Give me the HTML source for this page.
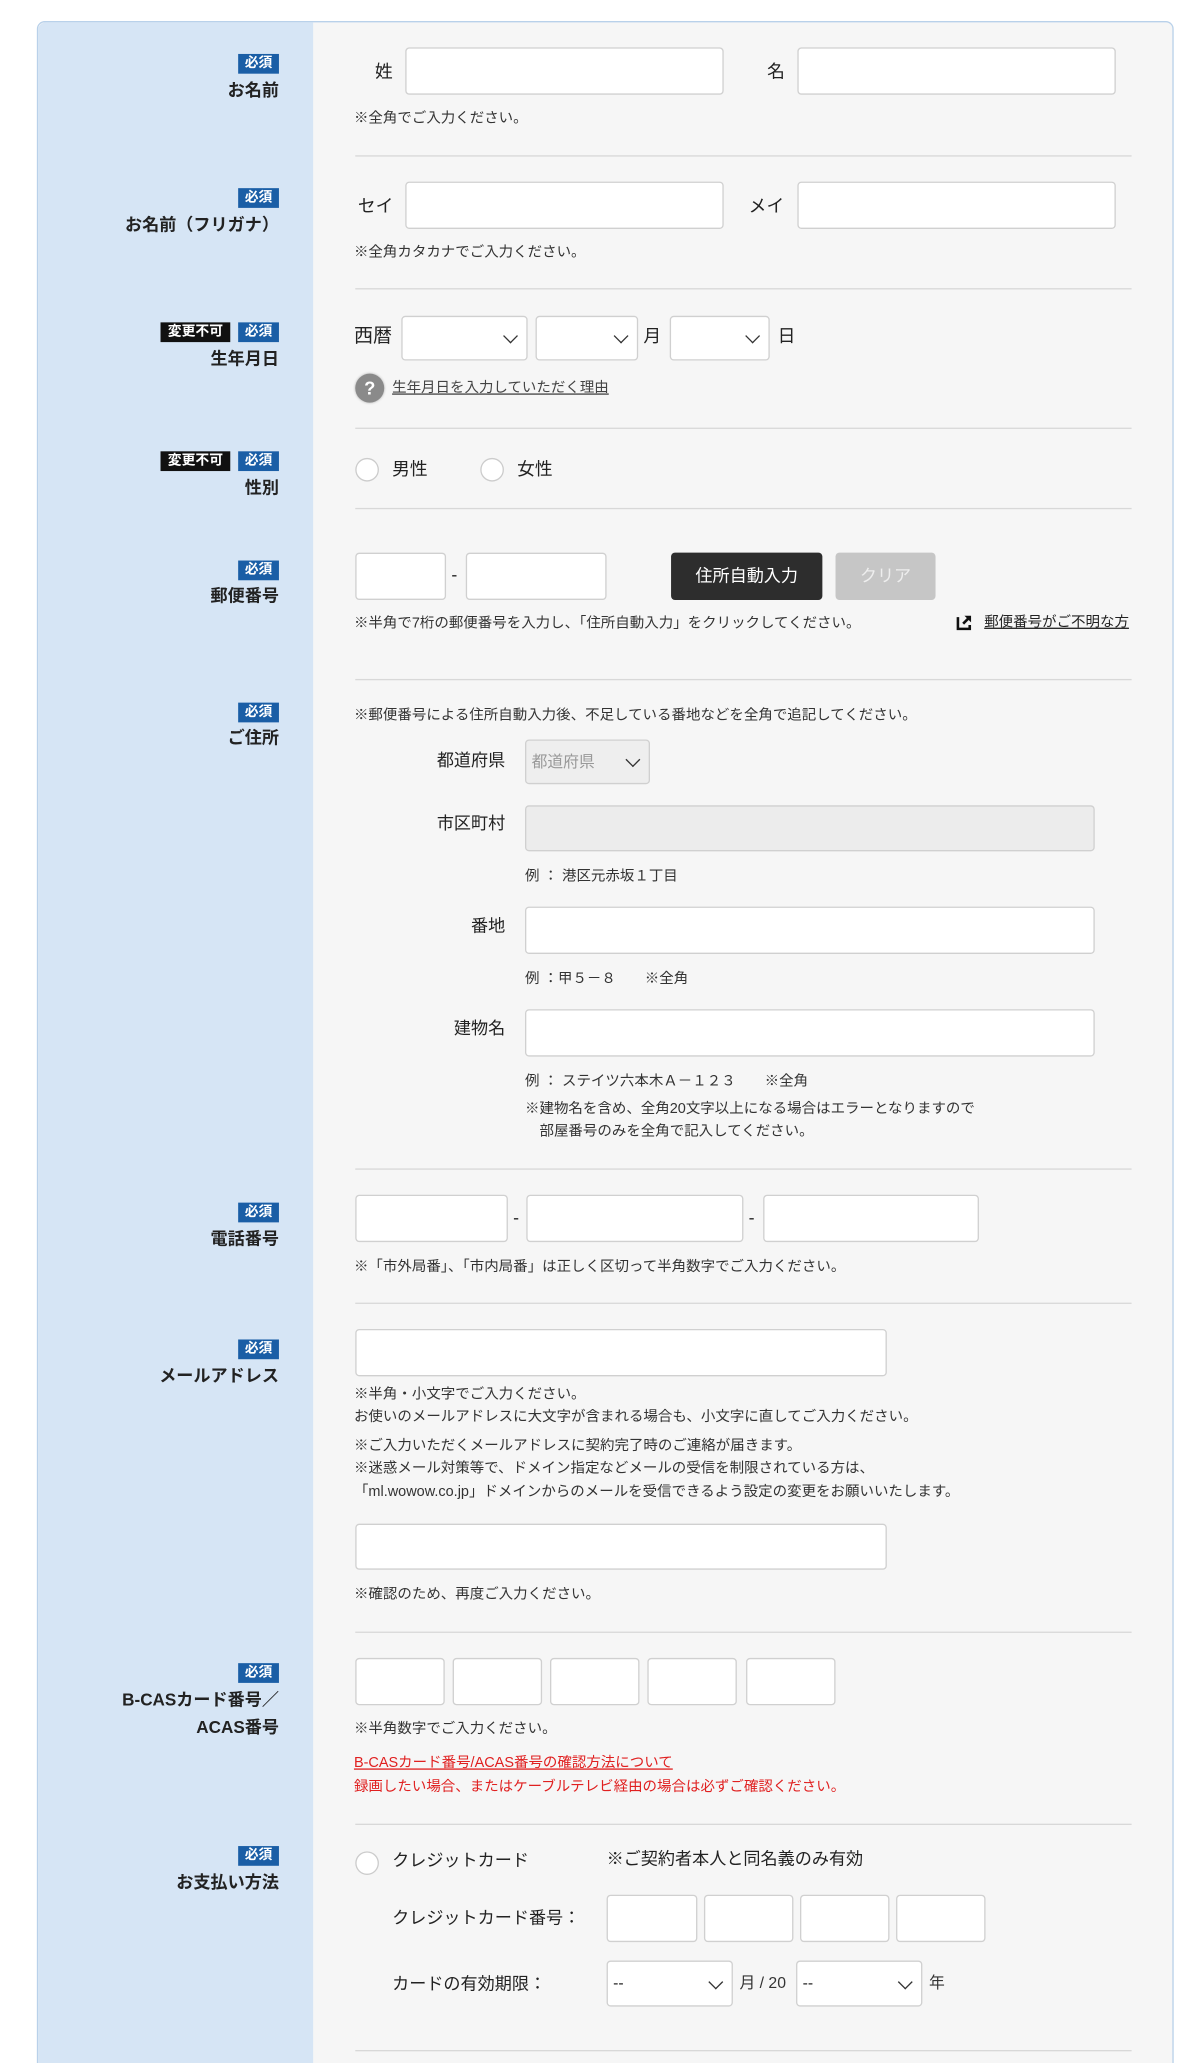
<!DOCTYPE html>
<html><head><meta charset="utf-8">
<style>
html,body{margin:0;padding:0;background:#fff;width:1200px;height:2063px;overflow:hidden}
#w{position:absolute;left:0;top:0;width:912px;height:1568px;overflow:hidden;transform:scale(1.31579);transform-origin:0 0;font-family:"Liberation Sans","Noto Sans CJK JP",sans-serif;color:#222}
#w div,#w span{position:absolute}
.box{left:28px;top:16px;width:862px;height:1620px;border:1px solid #b9d1ea;border-radius:6px;background:#f6f6f6;overflow:hidden}
.lc{left:29px;top:17px;width:209px;height:1620px;background:#d6e5f5;border-radius:6px 0 0 0}
.bd{height:15px;line-height:15px;font-size:10.5px;font-weight:bold;color:#fff;background:#1a5ea6;padding:0 3px;text-align:center}
.bk{background:#111}
.lb{right:700px;font-size:13px;font-weight:bold;line-height:16px;text-align:right;white-space:nowrap}
.t{font-size:13.5px;line-height:16px;white-space:nowrap}
.n{font-size:11px;line-height:14px;color:#333;white-space:nowrap}
.in{background:#fff;border:1px solid #d0d0d0;border-radius:3px;box-sizing:border-box}
.hr{left:270px;width:590px;height:1px;background:#d8d8d8}
.sel::after{content:"";position:absolute;right:8px;top:50%;width:7px;height:7px;border-right:1.5px solid #333;border-bottom:1.5px solid #333;transform:translateY(-70%) rotate(45deg)}
.rd{width:18px;height:18px;border:1px solid #ccc;border-radius:50%;background:#fff;box-sizing:border-box}
.red{color:#e02020}
</style></head><body>
<div id="w">
<div class="box"></div>
<div class="lc"></div>

<div class="bd" style="left:181px;top:41px;width:25px">必須</div>
<div class="lb" style="top:61px">お名前</div>
<div class="t" style="left:285px;top:47px">姓</div>
<div class="in" style="left:308px;top:36px;width:242px;height:36px"></div>
<div class="t" style="left:583px;top:47px">名</div>
<div class="in" style="left:606px;top:36px;width:242px;height:36px"></div>
<div class="n" style="left:269px;top:83px">※全角でご入力ください。</div>
<div class="hr" style="top:118px"></div>

<div class="bd" style="left:181px;top:143px;width:25px">必須</div>
<div class="lb" style="top:163px">お名前（フリガナ）</div>
<div class="t" style="left:272px;top:149px">セイ</div>
<div class="in" style="left:308px;top:138px;width:242px;height:36px"></div>
<div class="t" style="left:569px;top:149px">メイ</div>
<div class="in" style="left:606px;top:138px;width:242px;height:36px"></div>
<div class="n" style="left:269px;top:185px">※全角カタカナでご入力ください。</div>
<div class="hr" style="top:219px"></div>

<div class="bd bk" style="left:122px;top:245px;width:47px">変更不可</div>
<div class="bd" style="left:181px;top:245px;width:25px">必須</div>
<div class="lb" style="top:265px">生年月日</div>
<div class="t" style="left:269px;top:248px;font-size:14.5px">西暦</div>
<div class="in sel" style="left:305px;top:240px;width:96px;height:34px"></div>
<div class="in sel" style="left:407px;top:240px;width:78px;height:34px"></div>
<div class="t" style="left:489px;top:248px">月</div>
<div class="in sel" style="left:509px;top:240px;width:76px;height:34px"></div>
<div class="t" style="left:591px;top:248px">日</div>
<div style="left:270px;top:284px;width:22px;height:22px;border-radius:50%;background:#8a8a8a;color:#fff;font-weight:bold;font-size:14px;line-height:22px;text-align:center;box-shadow:0 0 2px #aaa">?</div>
<div class="n" style="left:298px;top:288px;text-decoration:underline;color:#444">生年月日を入力していただく理由</div>
<div class="hr" style="top:325px"></div>

<div class="bd bk" style="left:122px;top:343px;width:47px">変更不可</div>
<div class="bd" style="left:181px;top:343px;width:25px">必須</div>
<div class="lb" style="top:363px">性別</div>
<div class="rd" style="left:270px;top:348px"></div>
<div class="t" style="left:298px;top:349px">男性</div>
<div class="rd" style="left:365px;top:348px"></div>
<div class="t" style="left:393px;top:349px">女性</div>
<div class="hr" style="top:386px"></div>

<div class="bd" style="left:181px;top:426px;width:25px">必須</div>
<div class="lb" style="top:445px">郵便番号</div>
<div class="in" style="left:270px;top:420px;width:69px;height:36px"></div>
<div class="t" style="left:343px;top:429px">-</div>
<div class="in" style="left:354px;top:420px;width:107px;height:36px"></div>
<div style="left:510px;top:420px;width:115px;height:36px;background:#2d2d2d;border-radius:3px;color:#fff;font-size:13px;line-height:36px;text-align:center">住所自動入力</div>
<div style="left:635px;top:420px;width:76px;height:36px;background:#c6c6c6;border-radius:3px;color:#eee;font-size:13px;line-height:36px;text-align:center">クリア</div>
<div class="n" style="left:269px;top:467px">※半角で7桁の郵便番号を入力し、「住所自動入力」をクリックしてください。</div>
<svg style="position:absolute;left:727px;top:467px" width="12" height="12" viewBox="0 0 12 12"><path d="M1 2V11H10V8" fill="none" stroke="#111" stroke-width="2"/><path d="M6 1H11V6Z" fill="#111"/><path d="M5 7L10 2" stroke="#111" stroke-width="2"/></svg>
<div class="n" style="left:748px;top:466px;text-decoration:underline;color:#222">郵便番号がご不明な方</div>
<div class="hr" style="top:516px"></div>

<div class="bd" style="left:181px;top:534px;width:25px">必須</div>
<div class="lb" style="top:553px">ご住所</div>
<div class="n" style="left:269px;top:537px">※郵便番号による住所自動入力後、不足している番地などを全角で追記してください。</div>
<div class="t" style="left:300px;width:84px;text-align:right;top:570px;font-size:13px">都道府県</div>
<div class="in sel" style="left:399px;top:562px;width:95px;height:34px;background:#eee;color:#999;font-size:12px;line-height:32px;padding-left:4px">都道府県</div>
<div class="t" style="left:300px;width:84px;text-align:right;top:618px;font-size:13px">市区町村</div>
<div class="in" style="left:399px;top:612px;width:433px;height:35px;background:#ececec"></div>
<div class="n" style="left:399px;top:659px">例 ： 港区元赤坂１丁目</div>
<div class="t" style="left:300px;width:84px;text-align:right;top:696px;font-size:13px">番地</div>
<div class="in" style="left:399px;top:689px;width:433px;height:36px"></div>
<div class="n" style="left:399px;top:737px">例 ：甲５－８　　※全角</div>
<div class="t" style="left:300px;width:84px;text-align:right;top:774px;font-size:13px">建物名</div>
<div class="in" style="left:399px;top:767px;width:433px;height:36px"></div>
<div class="n" style="left:399px;top:815px">例 ： ステイツ六本木Ａ－１２３　　※全角</div>
<div class="n" style="left:399px;top:836px">※建物名を含め、全角20文字以上になる場合はエラーとなりますので</div>
<div class="n" style="left:410px;top:853px">部屋番号のみを全角で記入してください。</div>
<div class="hr" style="top:888px"></div>

<div class="bd" style="left:181px;top:914px;width:25px">必須</div>
<div class="lb" style="top:934px">電話番号</div>
<div class="in" style="left:270px;top:908px;width:116px;height:36px"></div>
<div class="t" style="left:390px;top:918px">-</div>
<div class="in" style="left:400px;top:908px;width:165px;height:36px"></div>
<div class="t" style="left:569px;top:918px">-</div>
<div class="in" style="left:580px;top:908px;width:164px;height:36px"></div>
<div class="n" style="left:269px;top:956px">※「市外局番」、「市内局番」は正しく区切って半角数字でご入力ください。</div>
<div class="hr" style="top:990px"></div>

<div class="bd" style="left:181px;top:1018px;width:25px">必須</div>
<div class="lb" style="top:1038px">メールアドレス</div>
<div class="in" style="left:270px;top:1010px;width:404px;height:36px"></div>
<div class="n" style="left:269px;top:1053px">※半角・小文字でご入力ください。</div>
<div class="n" style="left:269px;top:1070px">お使いのメールアドレスに大文字が含まれる場合も、小文字に直してご入力ください。</div>
<div class="n" style="left:269px;top:1092px">※ご入力いただくメールアドレスに契約完了時のご連絡が届きます。</div>
<div class="n" style="left:269px;top:1109px">※迷惑メール対策等で、ドメイン指定などメールの受信を制限されている方は、</div>
<div class="n" style="left:269px;top:1127px">「ml.wowow.co.jp」ドメインからのメールを受信できるよう設定の変更をお願いいたします。</div>
<div class="in" style="left:270px;top:1158px;width:404px;height:35px"></div>
<div class="n" style="left:269px;top:1205px">※確認のため、再度ご入力ください。</div>
<div class="hr" style="top:1240px"></div>

<div class="bd" style="left:181px;top:1264px;width:25px">必須</div>
<div class="lb" style="top:1284px">B-CASカード番号／</div>
<div class="lb" style="top:1305px">ACAS番号</div>
<div class="in" style="left:270px;top:1260px;width:68px;height:36px"></div>
<div class="in" style="left:344px;top:1260px;width:68px;height:36px"></div>
<div class="in" style="left:418px;top:1260px;width:68px;height:36px"></div>
<div class="in" style="left:492px;top:1260px;width:68px;height:36px"></div>
<div class="in" style="left:567px;top:1260px;width:68px;height:36px"></div>
<div class="n" style="left:269px;top:1307px">※半角数字でご入力ください。</div>
<div class="n red" style="left:269px;top:1333px;text-decoration:underline">B-CASカード番号/ACAS番号の確認方法について</div>
<div class="n red" style="left:269px;top:1351px">録画したい場合、またはケーブルテレビ経由の場合は必ずご確認ください。</div>
<div class="hr" style="top:1386px"></div>

<div class="bd" style="left:181px;top:1403px;width:25px">必須</div>
<div class="lb" style="top:1423px">お支払い方法</div>
<div class="rd" style="left:270px;top:1407px"></div>
<div class="t" style="left:298px;top:1406px;font-size:13px">クレジットカード</div>
<div class="t" style="left:461px;top:1405px;font-size:13px">※ご契約者本人と同名義のみ有効</div>
<div class="t" style="left:298px;top:1450px;font-size:13px">クレジットカード番号：</div>
<div class="in" style="left:461px;top:1440px;width:69px;height:36px"></div>
<div class="in" style="left:535px;top:1440px;width:68px;height:36px"></div>
<div class="in" style="left:608px;top:1440px;width:68px;height:36px"></div>
<div class="in" style="left:681px;top:1440px;width:68px;height:36px"></div>
<div class="t" style="left:298px;top:1500px;font-size:13px">カードの有効期限：</div>
<div class="in sel" style="left:461px;top:1490px;width:96px;height:35px;font-size:12px;line-height:33px;padding-left:4px">--</div>
<div class="n" style="left:562px;top:1500px;font-size:12px">月 / 20</div>
<div class="in sel" style="left:605px;top:1490px;width:96px;height:35px;font-size:12px;line-height:33px;padding-left:4px">--</div>
<div class="n" style="left:706px;top:1500px;font-size:12px">年</div>
<div class="hr" style="top:1558px"></div>
</div>
</body></html>
